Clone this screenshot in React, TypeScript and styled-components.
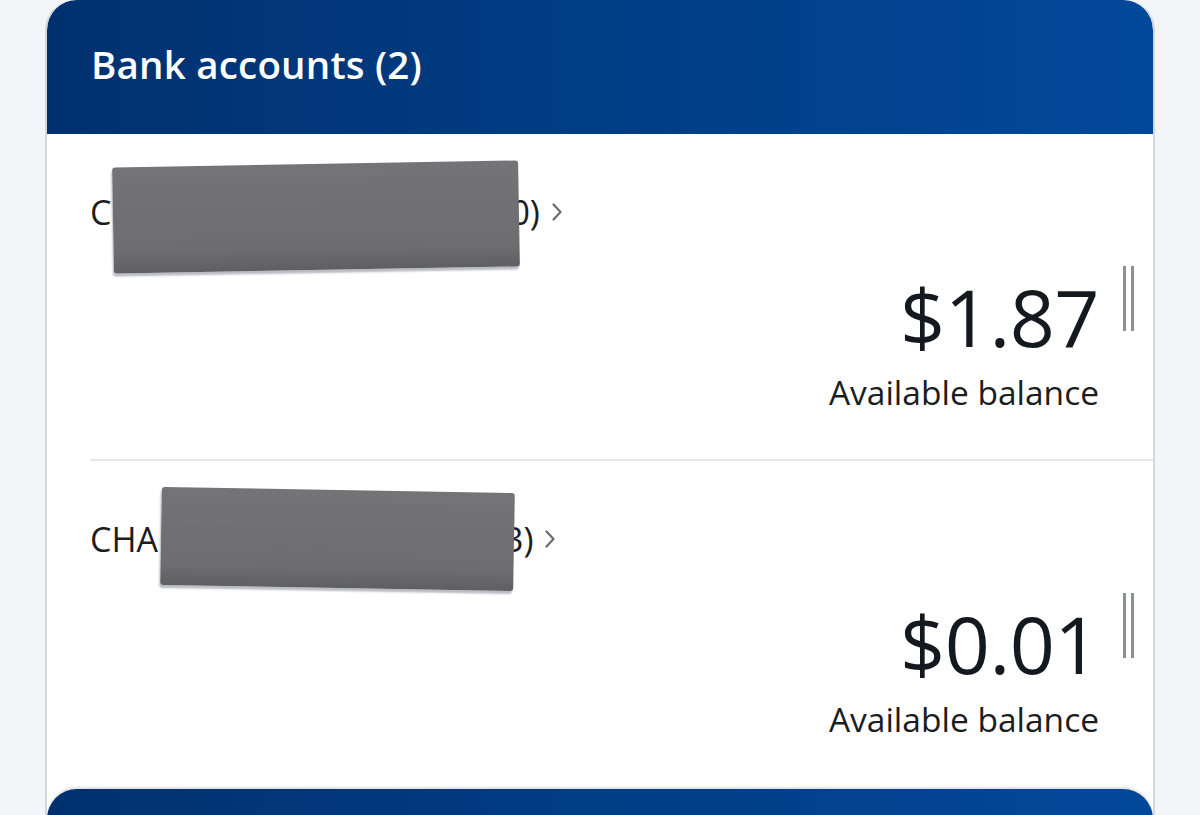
import React from "react";
import styled, { createGlobalStyle } from "styled-components";

const Global = createGlobalStyle`
  html, body { margin: 0; padding: 0; }
  body {
    background: #f3f5f8;
    font-family: "Open Sans", "Noto Sans", sans-serif;
    width: 1200px;
    height: 815px;
    overflow: hidden;
  }
`;

const Page = styled.div`
  padding: 0 45px 0 45px;
`;

const Shell = styled.div`
  background: #ffffff;
  border-left: 2px solid #d3d7dd;
  border-right: 2px solid #d3d7dd;
  border-radius: 30px 30px 0 0;
  height: 815px;
  overflow: hidden;
`;

const Header = styled.div<{ $top?: boolean }>`
  height: 134px;
  box-sizing: border-box;
  background: linear-gradient(90deg, #01306f 0%, #013c83 45%, #02489a 100%);
  border-radius: 30px 30px 0 0;
  display: flex;
  align-items: center;
  padding-left: 44px;
  ${(p) => (!p.$top ? "box-shadow: 0 -2px 2px rgba(0,0,0,0.12);" : "")}
`;

const Title = styled.h2`
  margin: 0;
  color: #ffffff;
  font-size: 38.5px;
  font-weight: 600;
  letter-spacing: 0.2px;
  margin-top: -6px;
`;

const Row = styled.div<{ $last?: boolean }>`
  margin-left: 43px;
  padding-top: 56px;
  height: ${(p) => (p.$last ? "328px" : "327px")};
  box-sizing: border-box;
  border-bottom: ${(p) => (p.$last ? "none" : "2px solid #e4e6ea")};
  display: flex;
  flex-direction: column;
`;

const NameLine = styled.div`
  position: relative;
  display: flex;
  align-items: center;
  height: 44px;
  font-size: 34px;
  color: #1b1d21;
`;

const Chevron = styled.svg`
  margin-left: 10px;
  width: 14px;
  height: 24px;
`;

const Redaction = styled.div<{ $left: number; $width: number; $top: number; $height: number; $rot: number }>`
  position: absolute;
  left: ${(p) => p.$left}px;
  top: ${(p) => p.$top}px;
  width: ${(p) => p.$width}px;
  height: ${(p) => p.$height}px;
  background: linear-gradient(180deg, #747477 0%, #6d6d70 80%, #5f5f63 100%);
  transform: rotate(${(p) => p.$rot}deg);
  border-radius: 3px;
  box-shadow: -1px 3px 2px rgba(60, 60, 90, 0.35);
`;

const AmountArea = styled.div`
  display: flex;
  justify-content: flex-end;
  align-items: flex-start;
  margin-top: 38px;
  padding-right: 19px;
`;

const AmountBlock = styled.div`
  text-align: right;
  margin-right: 24px;
`;

const Amount = styled.div`
  font-size: 79px;
  line-height: 90px;
  color: #14181f;
  letter-spacing: -0.5px;
`;

const Label = styled.div`
  font-size: 33.5px;
  line-height: 44px;
  color: #1b1d21;
  margin-top: 8px;
`;

const Bars = styled.div`
  display: flex;
  gap: 5px;
  margin-top: -6px;
`;

const Bar = styled.span`
  display: block;
  width: 3px;
  height: 65px;
  background: #8d8f93;
`;

const ChevronIcon = () => (
  <Chevron viewBox="0 0 14 24">
    <path d="M3.5 4.5 L10.5 12 L3.5 19.5" fill="none" stroke="#6a6c70" strokeWidth="2.2" strokeLinecap="round" strokeLinejoin="round" />
  </Chevron>
);

type Acc = {
  prefix: string;
  suffix: string;
  gap: number;
  amount: string;
  red: { left: number; width: number; top: number; height: number; rot: number };
};

const accounts: Acc[] = [
  { prefix: "C", suffix: "0)", gap: 399, amount: "$1.87", red: { left: 23, width: 406, top: -26, height: 106, rot: -1.0 } },
  { prefix: "CHA", suffix: "3)", gap: 346, amount: "$0.01", red: { left: 71, width: 353, top: -27, height: 98, rot: 1.0 } },
];

const Spacer = styled.span<{ $w: number }>`
  display: inline-block;
  width: ${(p) => p.$w}px;
`;

export default function App() {
  return (
    <>
      <Global />
      <Page>
        <Shell>
          <Header $top>
            <Title>Bank accounts (2)</Title>
          </Header>
          {accounts.map((a, i) => (
            <Row key={i} $last={i === accounts.length - 1}>
              <NameLine>
                <span>{a.prefix}</span>
                <Spacer $w={a.gap} />
                <span>{a.suffix}</span>
                <ChevronIcon />
                <Redaction $left={a.red.left} $width={a.red.width} $top={a.red.top} $height={a.red.height} $rot={a.red.rot} />
              </NameLine>
              <AmountArea>
                <AmountBlock>
                  <Amount>{a.amount}</Amount>
                  <Label>Available balance</Label>
                </AmountBlock>
                <Bars>
                  <Bar />
                  <Bar />
                </Bars>
              </AmountArea>
            </Row>
          ))}
          <Header />
        </Shell>
      </Page>
    </>
  );
}
